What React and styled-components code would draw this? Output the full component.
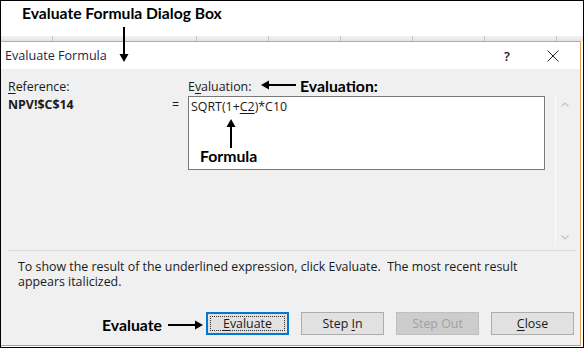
import React from "react";
import styled, { createGlobalStyle } from "styled-components";

const Global = createGlobalStyle`
  html, body { margin: 0; padding: 0; background: #fff; }
  * { box-sizing: border-box; }
`;

const ui = `"Segoe UI", "Open Sans", "Noto Sans", sans-serif`;
const note = `Lato, "Open Sans", sans-serif`;

const Frame = styled.div`
  position: relative;
  width: 584px;
  height: 348px;
  border: 1px solid #000;
  display: flex;
  flex-direction: column;
  background: #fff;
  overflow: hidden;
`;

const Header = styled.div`
  height: 35px;
  padding: 3px 0 0 21px;
  background: #fff;
`;

const Caption = styled.span`
  font-family: ${note};
  font-weight: 700;
  font-size: 15.7px;
  line-height: 19px;
  color: #000;
`;

const Strip = styled.div`
  height: 5px;
  display: flex;
  background: linear-gradient(#f4f4f4, #e2e2e2);
`;

const Cell = styled.div`
  flex: 0 0 ${(p) => p.$w}px;
  border-right: 1px solid #c6c6c6;
`;

const Dialog = styled.div`
  flex: 1;
  margin: 0 2px 1px 0;
  border-top: 1px solid #e2a35e;
  border-right: 1px solid #e2a35e;
  border-bottom: 1px solid #d09a5c;
  display: flex;
  flex-direction: column;
  background: #f0f0f0;
`;

const TitleBar = styled.div`
  height: 27px;
  background: #fff;
  display: flex;
  align-items: center;
  padding: 0 4px 0 4px;
  font-family: ${ui};
  font-size: 12.6px;
  color: #231f45;
`;

const Title = styled.span`
  flex: 1;
`;

const TitleBtn = styled.span`
  width: 46px;
  height: 27px;
  display: flex;
  align-items: center;
  justify-content: center;
  color: #222;
  font-size: 13px;
  font-weight: 600;
`;

const Body = styled.div`
  flex: 1;
  display: flex;
  flex-direction: column;
  padding: 10px 4px 0 7px;
  font-family: ${ui};
  font-size: 12.4px;
  color: #1a1a1a;
`;

const TopSection = styled.div`
  display: flex;
  height: 167px;
`;

const LeftCol = styled.div`
  width: 164px;
  display: flex;
  flex-direction: column;
  gap: 3px;
`;

const Label = styled.div`
  line-height: 15px;
  height: 15px;
`;

const Value = styled.div`
  line-height: 15px;
  font-weight: 700;
`;

const Key = styled.u`
  text-decoration-thickness: 1px;
  text-underline-offset: 2px;
`;

const EqCol = styled.div`
  width: 16px;
  padding-top: 18px;
  line-height: 15px;
`;

const RightCol = styled.div`
  width: 357px;
  display: flex;
  flex-direction: column;
  gap: 2px;
`;

const EvalBox = styled.div`
  height: 74px;
  background: #fff;
  border: 1px solid #7a7a7a;
  padding: 2px 2px;
  line-height: 15px;
`;

const Scroll = styled.div`
  margin: 17px 0 0 10px;
  width: 18px;
  height: 150px;
  border-left: 1px solid #fbfbfb;
  display: flex;
  flex-direction: column;
  justify-content: space-between;
  align-items: center;
  padding: 6px 0 6px;
`;

const Separator = styled.div`
  height: 1px;
  background: #dcdcdc;
  margin-top: 4px;
`;

const Desc = styled.p`
  margin: 8px 0 0 10px;
  line-height: 15px;
  white-space: pre-wrap;
`;

const Buttons = styled.div`
  margin: 23px 2px 0 0;
  display: flex;
  justify-content: flex-end;
  gap: 12px;
`;

const Button = styled.div`
  position: relative;
  width: 83px;
  height: 23px;
  display: flex;
  align-items: center;
  justify-content: center;
  background: ${(p) => (p.$disabled ? "#cccccc" : "#e1e1e1")};
  border: 1px solid ${(p) => (p.$primary ? "#0078d7" : p.$disabled ? "#bfbfbf" : "#adadad")};
  box-shadow: ${(p) => (p.$primary ? "inset 0 0 0 1px #0078d7" : "none")};
  color: ${(p) => (p.$disabled ? "#a0a0a0" : "#1a1a1a")};
  font-size: 12.4px;
  &::after {
    content: "";
    display: ${(p) => (p.$primary ? "block" : "none")};
    position: absolute;
    inset: 3px;
    border: 1px dotted #333;
  }
`;

const Note = styled.div`
  position: absolute;
  left: ${(p) => p.$x}px;
  top: ${(p) => p.$y}px;
  font-family: ${note};
  font-weight: 700;
  font-size: 15.8px;
  line-height: 19px;
  color: #000;
  white-space: nowrap;
`;

const Arrow = styled.svg`
  position: absolute;
  left: ${(p) => p.$x}px;
  top: ${(p) => p.$y}px;
  overflow: visible;
`;

const Chevron = ({ up }) => (
  <svg width="8" height="5" viewBox="0 0 8 5">
    <path
      d={up ? "M0.5 4.5 L4 1 L7.5 4.5" : "M0.5 0.5 L4 4 L7.5 0.5"}
      fill="none"
      stroke="#c2c2c2"
      strokeWidth="1.2"
    />
  </svg>
);

export default function App() {
  const cells = [52, 72, 72, 72, 72, 72, 72, 72, 72];
  return (
    <>
      <Global />
      <Frame>
        <Header>
          <Caption>Evaluate Formula Dialog Box</Caption>
        </Header>
        <Strip>
          {cells.map((w, i) => (
            <Cell key={i} $w={w} />
          ))}
        </Strip>
        <Dialog>
          <TitleBar>
            <Title>Evaluate Formula</Title>
            <TitleBtn>?</TitleBtn>
            <TitleBtn>
              <svg width="12" height="12" viewBox="0 0 12 12">
                <path d="M0.5 0.5 L11.5 11.5 M11.5 0.5 L0.5 11.5" stroke="#222" strokeWidth="1" />
              </svg>
            </TitleBtn>
          </TitleBar>
          <Body>
            <TopSection>
              <LeftCol>
                <Label>
                  <Key>R</Key>eference:
                </Label>
                <Value>NPV!$C$14</Value>
              </LeftCol>
              <EqCol>=</EqCol>
              <RightCol>
                <Label>
                  E<Key>v</Key>aluation:
                </Label>
                <EvalBox>
                  SQRT(1+<Key>C2</Key>)*C10
                </EvalBox>
              </RightCol>
              <Scroll>
                <Chevron up />
                <Chevron />
              </Scroll>
            </TopSection>
            <Separator />
            <Desc>
              {"To show the result of the underlined expression, click Evaluate.  The most recent result\nappears italicized."}
            </Desc>
            <Buttons>
              <Button $primary>
                <span>
                  <Key>E</Key>valuate
                </span>
              </Button>
              <Button>
                <span>
                  Step <Key>I</Key>n
                </span>
              </Button>
              <Button $disabled>
                <span>Step Out</span>
              </Button>
              <Button>
                <span>
                  <Key>C</Key>lose
                </span>
              </Button>
            </Buttons>
          </Body>
        </Dialog>

        <Arrow $x={118} $y={26} width="10" height="36">
          <path d="M5 0 V33" stroke="#000" strokeWidth="2" />
          <path d="M0.5 27 L5 35 L9.5 27 Z" fill="#000" />
        </Arrow>

        <Note $x={299} $y={75}>Evaluation:</Note>
        <Arrow $x={260} $y={79} width="36" height="10">
          <path d="M3 5 H35" stroke="#000" strokeWidth="2" />
          <path d="M0 5 L8 0.5 L8 9.5 Z" fill="#000" />
        </Arrow>

        <Note $x={199} $y={145}>Formula</Note>
        <Arrow $x={225} $y={118} width="10" height="30">
          <path d="M5 3 V29" stroke="#000" strokeWidth="2" />
          <path d="M0.5 8 L5 0 L9.5 8 Z" fill="#000" />
        </Arrow>

        <Note $x={101} $y={314}>Evaluate</Note>
        <Arrow $x={167} $y={319} width="36" height="10">
          <path d="M0 5 H32" stroke="#000" strokeWidth="2" />
          <path d="M35 5 L27 0.5 L27 9.5 Z" fill="#000" />
        </Arrow>
      </Frame>
    </>
  );
}
